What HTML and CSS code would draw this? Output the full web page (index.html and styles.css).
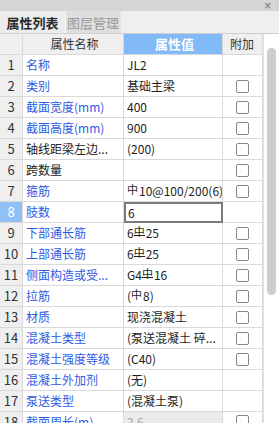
FILE: index.html
```html
<!DOCTYPE html>
<html lang="zh">
<head>
<meta charset="utf-8">
<link rel="stylesheet" href="styles.css">
</head>
<body>
<div class="panel">
  <div class="titlebar"><span class="close">×</span></div>
  <div class="tabs">
    <div class="tab active">属性列表</div>
    <div class="tab">图层管理</div>
  </div>
  <div class="main">
    <div class="grid">
      <div class="row head">
        <div class="c num"></div>
        <div class="c name hc">属性名称</div>
        <div class="c val hv">属性值</div>
        <div class="c add hc">附加</div>
      </div>
      <div class="row"><div class="c num">1</div><div class="c name">名称</div><div class="c val">JL2</div><div class="c add"></div></div>
      <div class="row"><div class="c num">2</div><div class="c name">类别</div><div class="c val">基础主梁</div><div class="c add"><span class="cb"></span></div></div>
      <div class="row"><div class="c num">3</div><div class="c name">截面宽度(mm)</div><div class="c val">400</div><div class="c add"><span class="cb"></span></div></div>
      <div class="row"><div class="c num">4</div><div class="c name">截面高度(mm)</div><div class="c val">900</div><div class="c add"><span class="cb"></span></div></div>
      <div class="row"><div class="c num">5</div><div class="c name blk">轴线距梁左边...</div><div class="c val">(200)</div><div class="c add"><span class="cb"></span></div></div>
      <div class="row"><div class="c num">6</div><div class="c name blk">跨数量</div><div class="c val"></div><div class="c add"><span class="cb"></span></div></div>
      <div class="row"><div class="c num">7</div><div class="c name">箍筋</div><div class="c val"><span class="bar">中</span>10@100/200(6)</div><div class="c add"><span class="cb"></span></div></div>
      <div class="row"><div class="c num sel">8</div><div class="c name">肢数</div><div class="c val edit">6</div><div class="c add"></div></div>
      <div class="row"><div class="c num">9</div><div class="c name">下部通长筋</div><div class="c val">6<span class="bar hrb">中</span>25</div><div class="c add"><span class="cb"></span></div></div>
      <div class="row"><div class="c num">10</div><div class="c name">上部通长筋</div><div class="c val">6<span class="bar hrb">中</span>25</div><div class="c add"><span class="cb"></span></div></div>
      <div class="row"><div class="c num">11</div><div class="c name">侧面构造或受...</div><div class="c val">G4<span class="bar hrb">中</span>16</div><div class="c add"><span class="cb"></span></div></div>
      <div class="row"><div class="c num">12</div><div class="c name">拉筋</div><div class="c val">(<span class="bar">中</span>8)</div><div class="c add"><span class="cb"></span></div></div>
      <div class="row"><div class="c num">13</div><div class="c name">材质</div><div class="c val">现浇混凝土</div><div class="c add"><span class="cb"></span></div></div>
      <div class="row"><div class="c num">14</div><div class="c name">混凝土类型</div><div class="c val">(泵送混凝土 碎...</div><div class="c add"><span class="cb"></span></div></div>
      <div class="row"><div class="c num">15</div><div class="c name">混凝土强度等级</div><div class="c val">(C40)</div><div class="c add"><span class="cb"></span></div></div>
      <div class="row"><div class="c num">16</div><div class="c name">混凝土外加剂</div><div class="c val">(无)</div><div class="c add"></div></div>
      <div class="row"><div class="c num">17</div><div class="c name">泵送类型</div><div class="c val">(混凝土泵)</div><div class="c add"></div></div>
      <div class="row last"><div class="c num">18</div><div class="c name">截面周长(m)</div><div class="c val ro">2.6</div><div class="c add"><span class="cb"></span></div></div>
    </div>
    <div class="scroll"><div class="thumb"></div></div>
  </div>
</div>
</body>
</html>
```
FILE: styles.css
```css
* { box-sizing: border-box; }
html, body { margin: 0; padding: 0; }
body {
  width: 279px;
  height: 423px;
  overflow: hidden;
  background: #ffffff;
  font-family: "Noto Sans CJK SC", "Noto Sans", sans-serif;
  font-size: 12px;
  color: #222;
}
.panel { display: flex; flex-direction: column; height: 423px; }
.titlebar {
  height: 11px;
  flex: none;
  background: #d5d5d8;
  display: flex;
  justify-content: flex-end;
  align-items: center;
  padding-right: 7px;
}
.close { font-size: 10px; line-height: 10px; color: #8a8a8a; font-family: "DejaVu Sans", sans-serif; font-weight: bold; }
.tabs {
  height: 23px;
  flex: none;
  background: #efefef;
  border-bottom: 1px solid #cfcfcf;
  display: flex;
  align-items: stretch;
}
.tab {
  display: flex;
  align-items: center;
  justify-content: center;
  font-size: 13px;
  white-space: nowrap;
  color: #999;
  background: #dfdfdf;
  width: 56px;
  border-left: 1px solid #f6f6f6;
  border-right: 1px solid #e6e6e6;
}
.tab.active {
  color: #2a2a2a;
  font-weight: bold;
  background: #ececec;
  width: 65px;
  border-left: none;
  border-right: none;
}
.main { display: flex; flex: 1; min-height: 0; overflow: hidden; }
.grid { width: 263px; display: flex; flex-direction: column; }
.row {
  display: grid;
  grid-template-columns: 23px 101px 99px 40px;
  height: 21px;
  flex: none;
}
.c {
  border-right: 1px solid #d9d9d9;
  border-bottom: 1px solid #d9d9d9;
  display: flex;
  align-items: center;
  white-space: nowrap;
  overflow: hidden;
  line-height: 20px;
}
.num {
  background: #efefef;
  justify-content: center;
  font-size: 13px;
  color: #333;
}
.num.sel { background: #8fc1f6; color: #fff; }
.name { padding-left: 3px; color: #2f5be3; }
.name.blk { color: #222; }
.val { padding-left: 3px; color: #1e1e1e; }
.val.edit { border: 2px solid #7b7b7b; padding-left: 2px; }
.val.ro { background: #ebebeb; color: #aaa; }
.add { justify-content: center; }
.head .c { background: #efefef; }
.head .hc { justify-content: center; color: #333; }
.head .add { justify-content: flex-start; padding-left: 7px; }
.head .hv { background: #81baf6; color: #fff; justify-content: center; font-weight: bold; font-size: 13px; }
.last .c { align-items: flex-start; }
.last .cb { margin-top: 3px; }
.cb {
  width: 13px;
  height: 13px;
  border: 1px solid #888;
  border-radius: 2px;
  background: #fff;
}
.bar {
  display: inline-block;
  font-size: 11px;
  line-height: 9px;
  position: relative;
  top: -2px;
  margin-right: 1px;
}
.hrb { border-bottom: 1px solid #222; line-height: 8px; }
.scroll {
  width: 16px;
  background: #ffffff;
  border-left: 1px solid #e2e2e2;
  padding: 14px 0 0 3px;
}
.thumb {
  width: 9px;
  height: 247px;
  border-radius: 5px;
  background: #cdcdcd;
}
```
